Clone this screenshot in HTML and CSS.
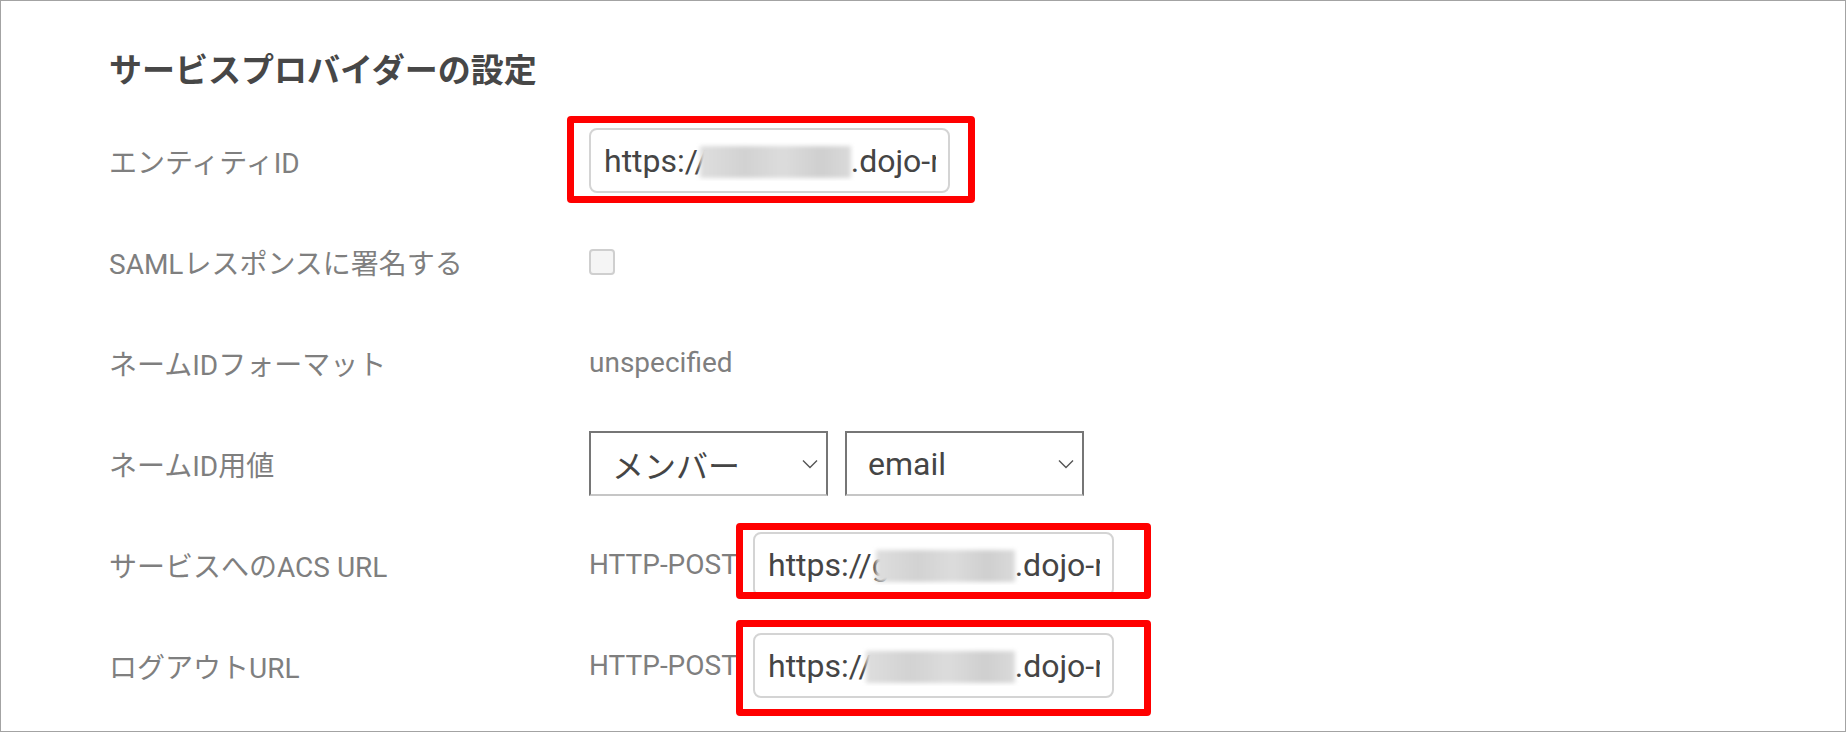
FILE: index.html
```html
<!DOCTYPE html>
<html lang="ja">
<head>
<meta charset="utf-8">
<title>サービスプロバイダーの設定</title>
<link rel="stylesheet" href="styles.css">
</head>
<body>
<div class="frame">
  <h2 class="title">サービスプロバイダーの設定</h2>

  <div class="row">
    <div class="label">エンティティID</div>
    <div class="value">
      <div class="field">
        <div class="url-input"><div class="clip">https://<span class="blur b1"></span>.dojo-ryu.example.com/saml</div></div>
        <div class="mark m1"></div>
      </div>
    </div>
  </div>

  <div class="row">
    <div class="label">SAMLレスポンスに署名する</div>
    <div class="value"><span class="checkbox"></span></div>
  </div>

  <div class="row">
    <div class="label">ネームIDフォーマット</div>
    <div class="value"><span class="plain">unspecified</span></div>
  </div>

  <div class="row">
    <div class="label">ネームID用値</div>
    <div class="value selects">
      <div class="select">
        <span class="sel-text jp">メンバー</span>
        <svg class="chev" width="16" height="10" viewBox="0 0 16 10"><polyline points="1,1.5 8,8.5 15,1.5" fill="none" stroke="#555" stroke-width="1.4"/></svg>
      </div>
      <div class="select">
        <span class="sel-text">email</span>
        <svg class="chev" width="16" height="10" viewBox="0 0 16 10"><polyline points="1,1.5 8,8.5 15,1.5" fill="none" stroke="#555" stroke-width="1.4"/></svg>
      </div>
    </div>
  </div>

  <div class="row">
    <div class="label">サービスへのACS URL</div>
    <div class="value">
      <span class="method">HTTP-POST</span>
      <div class="field">
        <div class="url-input"><div class="clip">https://g<span class="blur b2"></span>.dojo-ryu.example.com/acs</div></div>
        <div class="mark m2"></div>
      </div>
    </div>
  </div>

  <div class="row">
    <div class="label">ログアウトURL</div>
    <div class="value">
      <span class="method">HTTP-POST</span>
      <div class="field">
        <div class="url-input"><div class="clip">https://<span class="blur b3"></span>.dojo-ryu.example.com/logout</div></div>
        <div class="mark m3"></div>
      </div>
    </div>
  </div>
</div>
</body>
</html>
```

FILE: styles.css
```css
* { box-sizing: border-box; }

html, body {
  margin: 0;
  padding: 0;
  background: #fff;
}

body {
  font-family: Roboto, "Noto Sans CJK JP", sans-serif;
}

.frame {
  width: 1846px;
  height: 732px;
  border: 1px solid #a3a3a3;
  padding: 46px 0 0 108px;
  overflow: hidden;
}

.title {
  margin: 0 0 15px 0;
  font-size: 33px;
  line-height: 48px;
  font-weight: 700;
  color: #474747;
}

.row {
  display: flex;
  align-items: center;
  height: 101px;
}

.label {
  width: 480px;
  flex: none;
  font-size: 28px;
  color: #7f7f7f;
}

.value {
  display: flex;
  align-items: center;
}

.field {
  position: relative;
}

.url-input {
  width: 361px;
  height: 65px;
  border: 2px solid #d4d4d4;
  border-radius: 8px;
  padding: 0 12px 0 13px;
  display: flex;
  align-items: center;
  background: #fff;
}

.clip {
  overflow: hidden;
  white-space: nowrap;
  font-size: 32px;
  color: #454545;
  width: 100%;
  line-height: 40px;
}

.blur {
  display: inline-block;
  height: 32px;
  vertical-align: -6px;
  background: linear-gradient(90deg, #dedede 0%, #d2d2d2 30%, #dcdcdc 55%, #cfcfcf 80%, #dadada 100%);
  filter: blur(2px);
}

.b1 { width: 151px; margin-left: -8px; }
.b2 { width: 139px; margin-left: -14px; }
.b3 { width: 149px; margin-left: -6px; }

.mark {
  position: absolute;
  border: 7px solid #ff0000;
  border-radius: 4px;
  pointer-events: none;
}

.m1 { left: -22px; top: -12px; width: 408px; height: 87px; }
.m2 { left: -17px; top: -9px; width: 415px; height: 76px; }
.m3 { left: -17px; top: -13px; width: 415px; height: 96px; }

.checkbox {
  display: block;
  width: 26px;
  height: 26px;
  border: 2px solid #cfcfcf;
  border-radius: 4px;
  background: #f5f5f5;
}

.plain {
  font-size: 28px;
  color: #7f7f7f;
}

.selects {
  gap: 17px;
}

.select {
  width: 239px;
  height: 65px;
  border: 2px solid #767676;
  border-bottom-color: #c6c6c6;
  display: flex;
  align-items: center;
  justify-content: space-between;
  padding: 0 8px 0 21px;
  background: #fff;
}

.sel-text {
  font-size: 32px;
  color: #454545;
}

.chev {
  display: block;
}

.method {
  width: 164px;
  flex: none;
  font-size: 28px;
  color: #7f7f7f;
}
```
